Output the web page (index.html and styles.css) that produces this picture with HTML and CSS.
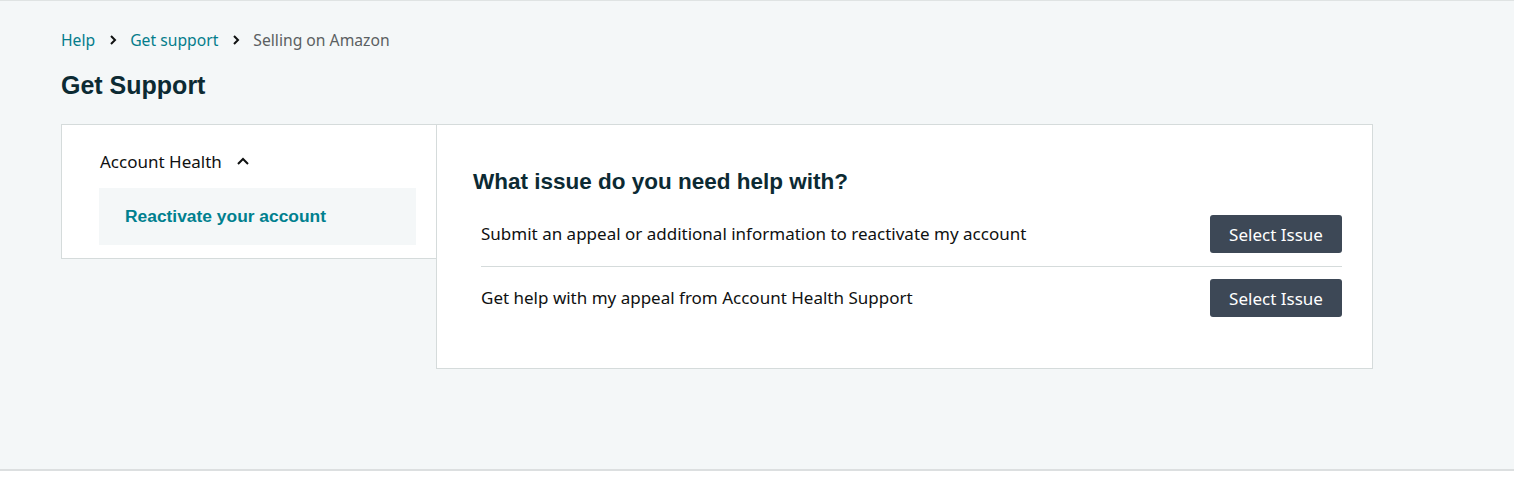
FILE: index.html
```html
<!DOCTYPE html>
<html lang="en">
<head>
<meta charset="utf-8">
<title>Get Support</title>
<link rel="stylesheet" href="styles.css">
</head>
<body>
<div class="page">
  <nav class="crumbs">
    <a class="crumb-link" href="#">Help</a>
    <svg class="crumb-sep" width="10" height="12" viewBox="0 0 10 12"><path d="M3 2 L7 6 L3 10" fill="none" stroke="#0f1111" stroke-width="2"/></svg>
    <a class="crumb-link" href="#">Get support</a>
    <svg class="crumb-sep" width="10" height="12" viewBox="0 0 10 12"><path d="M3 2 L7 6 L3 10" fill="none" stroke="#0f1111" stroke-width="2"/></svg>
    <span class="crumb-current">Selling on Amazon</span>
  </nav>
  <h1 class="title">Get Support</h1>
  <div class="cards">
    <aside class="side">
      <div class="side-head">
        <span>Account Health</span>
        <svg class="caret" width="14" height="10" viewBox="0 0 14 10"><path d="M2 8 L7 3 L12 8" fill="none" stroke="#0f1111" stroke-width="2"/></svg>
      </div>
      <div class="side-item">Reactivate your account</div>
    </aside>
    <section class="main">
      <h2 class="question">What issue do you need help with?</h2>
      <div class="row row-first">
        <span class="row-text">Submit an appeal or additional information to reactivate my account</span>
        <button class="btn">Select Issue</button>
      </div>
      <div class="row">
        <span class="row-text">Get help with my appeal from Account Health Support</span>
        <button class="btn">Select Issue</button>
      </div>
    </section>
  </div>
</div>
</body>
</html>
```
FILE: styles.css
```css
html, body {
  margin: 0;
  padding: 0;
  background: #ffffff;
}
body {
  font-family: "Noto Sans", "Liberation Sans", sans-serif;
  color: #0f1111;
}
.page {
  border-top: 1px solid #dfe3e3;
  border-bottom: 2px solid #dcdfe0;
  background: #f4f7f8;
  padding-left: 61px;
  box-sizing: border-box;
  height: 471px;
}
.crumbs {
  display: flex;
  align-items: center;
  gap: 10px;
  padding-top: 28px;
  height: 22px;
  font-size: 15.7px;
}
.crumb-link {
  color: #047d8c;
  text-decoration: none;
}
.crumb-current {
  color: #5b5f62;
}
.crumb-sep {
  margin: 0 2px 0 3px;
}
.title {
  margin: 20px 0 0;
  font-family: "Liberation Sans", Arial, sans-serif;
  font-weight: bold;
  font-size: 25px;
  line-height: 28px;
  color: #0c2a33;
}
.cards {
  display: flex;
  align-items: flex-start;
  margin-top: 25px;
}
.side {
  background: #fff;
  border: 1px solid #d5dbdb;
  border-right: none;
  padding: 26px 20px 13px 38px;
  box-sizing: border-box;
  width: 375px;
}
.side-head {
  display: flex;
  align-items: center;
  gap: 14px;
  font-size: 17px;
  line-height: 22px;
  color: #0f1111;
}
.caret {
  margin-top: -3px;
}
.side-item {
  margin-top: 15px;
  margin-left: -1px;
  background: #f4f7f8;
  height: 57px;
  display: flex;
  align-items: center;
  padding-left: 26px;
  font-family: "Liberation Sans", Arial, sans-serif;
  font-weight: bold;
  font-size: 17.4px;
  color: #00808f;
}
.main {
  width: 937px;
  height: 245px;
  box-sizing: border-box;
  background: #fff;
  border: 1px solid #d5dbdb;
  padding: 45px 30px 0 36px;
}
.question {
  margin: 0 0 9px;
  font-family: "Liberation Sans", Arial, sans-serif;
  font-weight: bold;
  font-size: 22.5px;
  line-height: 24px;
  color: #0c2a33;
}
.row {
  margin-left: 8px;
  display: flex;
  align-items: center;
  justify-content: space-between;
  padding: 12px 0 13px;
}
.row-first {
  border-bottom: 1px solid #d5dbdb;
}
.row-text {
  font-size: 17px;
  line-height: 22px;
  color: #0f1111;
}
.btn {
  width: 132px;
  height: 38px;
  border: none;
  border-radius: 3px;
  background: #3d4856;
  color: #fff;
  font-family: "Noto Sans", "Liberation Sans", sans-serif;
  font-size: 17px;
  font-weight: 400;
  cursor: pointer;
}
```
